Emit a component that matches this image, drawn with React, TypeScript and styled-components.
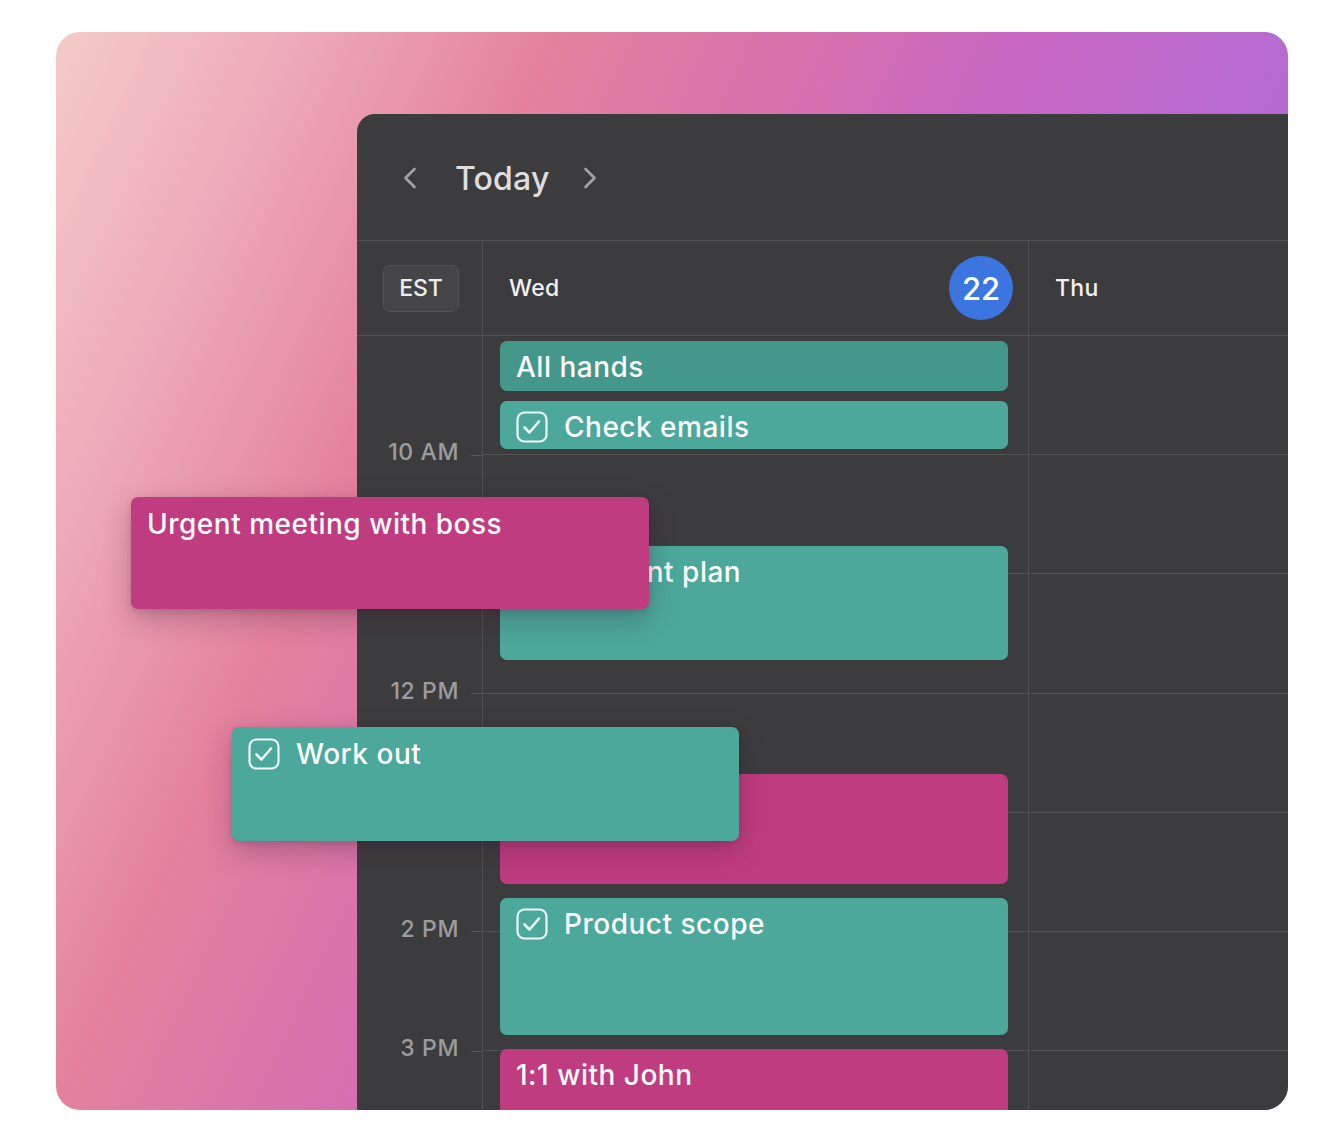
import styled, { createGlobalStyle } from "styled-components";

type Tone = "teal" | "tealDark" | "pink";

type CalEvent = {
  title: string;
  top: number;
  height: number;
  tone: Tone;
  task?: boolean;
};

const HOUR = 119.2;

const tones: Record<Tone, string> = {
  teal: "#4ba89b",
  tealDark: "#44978b",
  pink: "#bf3c80",
};

const slots = ["9 AM", "10 AM", "11 AM", "12 PM", "1 PM", "2 PM", "3 PM"];
const labels = ["10 AM", "11 AM", "12 PM", "1 PM", "2 PM", "3 PM"];

const wedEvents: CalEvent[] = [
  { title: "All hands", top: 5, height: 50, tone: "tealDark" },
  { title: "Check emails", top: 65, height: 48, tone: "teal", task: true },
  { title: "Adjustment plan", top: 210, height: 114, tone: "teal" },
  { title: "Design review", top: 438, height: 110, tone: "pink" },
  { title: "Product scope", top: 562, height: 137, tone: "teal", task: true },
  { title: "1:1 with John", top: 713, height: 110, tone: "pink" },
];

const GlobalStyle = createGlobalStyle`
  html, body {
    margin: 0;
    padding: 0;
    background: #ffffff;
  }
  body {
    font-family: Inter, "Noto Sans", "Liberation Sans", sans-serif;
    -webkit-font-smoothing: antialiased;
  }
  * {
    box-sizing: border-box;
  }
`;

const Page = styled.div`
  padding: 32px 54px 30px 56px;
`;

const Card = styled.div`
  position: relative;
  width: 1232px;
  height: 1078px;
  border-radius: 24px;
  overflow: hidden;
  display: flex;
  padding: 82px 0 0 301px;
  background: linear-gradient(
    115deg,
    #f4cbc9 0%,
    #eeaab8 14%,
    #e3819d 29%,
    #d570b0 45%,
    #c867c1 55%,
    #b66bd3 72%,
    #a86ad6 100%
  );
`;

const Panel = styled.div`
  flex: 1;
  min-width: 0;
  display: flex;
  flex-direction: column;
  background: #3c3c3e;
  border-top-left-radius: 18px;
  overflow: hidden;
`;

const Toolbar = styled.div`
  flex-shrink: 0;
  height: 126px;
  display: flex;
  align-items: center;
  padding: 2px 0 0 45px;
`;

const NavButton = styled.button`
  display: flex;
  align-items: center;
  justify-content: center;
  background: none;
  border: none;
  padding: 0;
  color: #a3a3a5;
  cursor: pointer;
`;

const Title = styled.h1`
  margin: 0 32px 0 37px;
  font-size: 32px;
  font-weight: 500;
  color: #dedede;
  letter-spacing: 0.2px;
`;

const Columns = styled.div`
  display: grid;
  grid-template-columns: 126px 546px 1fr;
`;

const HeadRow = styled(Columns)`
  flex-shrink: 0;
  height: 96px;
  border-top: 1px solid #525254;
  border-bottom: 1px solid #525254;
`;

const HeadCell = styled.div<{ $divider?: boolean }>`
  display: flex;
  align-items: center;
  padding: 0 15px 0 26px;
  border-right: ${(p) => (p.$divider ? "1px solid #525254" : "none")};
`;

const ZoneTag = styled.div`
  width: 76px;
  height: 47px;
  display: flex;
  align-items: center;
  justify-content: center;
  border-radius: 7px;
  background: #454547;
  border: 1px solid #545456;
  color: #ececec;
  font-size: 23px;
  font-weight: 500;
`;

const DayName = styled.span`
  flex: 1;
  color: #f0f0f0;
  font-size: 23px;
  font-weight: 500;
  letter-spacing: 0.3px;
`;

const DateBadge = styled.span`
  width: 64px;
  height: 64px;
  border-radius: 50%;
  background: #3b76e0;
  color: #ffffff;
  display: flex;
  align-items: center;
  justify-content: center;
  font-size: 31px;
  font-weight: 500;
`;

const Body = styled(Columns)`
  flex: 1;
  min-height: 0;
  overflow: hidden;
`;

const Gutter = styled.div`
  border-right: 1px solid #525254;
  padding-top: ${HOUR / 2}px;
`;

const TimeSlot = styled.div`
  height: ${HOUR}px;
  display: flex;
  align-items: center;
  justify-content: flex-end;
  gap: 12px;

  &::after {
    content: "";
    width: 11px;
    height: 1px;
    background: #58585a;
  }
`;

const TimeLabel = styled.span`
  color: #9c9c9e;
  font-size: 23px;
  font-weight: 500;
  letter-spacing: 0.6px;
  transform: translateY(-3px);
`;

const DayColumn = styled.div<{ $divider?: boolean }>`
  position: relative;
  border-right: ${(p) => (p.$divider ? "1px solid #525254" : "none")};
`;

const HourCell = styled.div`
  height: ${HOUR}px;
  border-bottom: 1px solid #525254;
`;

const EventCard = styled.div<{ $tone: Tone; $top: number; $height: number }>`
  position: absolute;
  left: 17px;
  right: 20px;
  top: ${(p) => p.$top}px;
  height: ${(p) => p.$height}px;
  background: ${(p) => tones[p.$tone]};
  border-radius: 7px;
  padding: 9px 16px;
  overflow: hidden;
`;

const FloatingCard = styled.div<{
  $tone: Tone;
  $left: number;
  $top: number;
  $width: number;
  $height: number;
}>`
  position: absolute;
  left: ${(p) => p.$left}px;
  top: ${(p) => p.$top}px;
  width: ${(p) => p.$width}px;
  height: ${(p) => p.$height}px;
  background: ${(p) => tones[p.$tone]};
  border-radius: 7px;
  padding: 10px 16px;
  box-shadow: 0 10px 28px rgba(60, 20, 50, 0.28), 0 2px 6px rgba(0, 0, 0, 0.12);
`;

const EventTitle = styled.div`
  display: flex;
  align-items: center;
  gap: 16px;
  height: 34px;
  color: #fbfbfb;
  font-size: 28px;
  font-weight: 500;
  letter-spacing: 0.5px;
  white-space: nowrap;
`;

function Chevron({ dir }: { dir: "left" | "right" }) {
  return (
    <svg width="16" height="22" viewBox="0 0 16 22" fill="none">
      <path
        d={dir === "left" ? "M12.5 2 L3.5 11 L12.5 20" : "M3.5 2 L12.5 11 L3.5 20"}
        stroke="currentColor"
        strokeWidth="2.6"
        strokeLinecap="round"
        strokeLinejoin="round"
      />
    </svg>
  );
}

function TaskBox() {
  return (
    <svg width="32" height="32" viewBox="0 0 32 32" fill="none">
      <rect x="1.5" y="1.5" width="29" height="29" rx="7" stroke="#eef8f6" strokeWidth="2.2" />
      <path
        d="M8.5 16.5 L13.5 21.5 L23 10.5"
        stroke="#eef8f6"
        strokeWidth="2.6"
        strokeLinecap="round"
        strokeLinejoin="round"
      />
    </svg>
  );
}

function EventLabel({ event }: { event: { title: string; task?: boolean } }) {
  return (
    <EventTitle>
      {event.task && <TaskBox />}
      {event.title}
    </EventTitle>
  );
}

export default function App() {
  return (
    <>
      <GlobalStyle />
      <Page>
        <Card>
          <Panel>
            <Toolbar>
              <NavButton aria-label="Previous day">
                <Chevron dir="left" />
              </NavButton>
              <Title>Today</Title>
              <NavButton aria-label="Next day">
                <Chevron dir="right" />
              </NavButton>
            </Toolbar>

            <HeadRow>
              <HeadCell $divider>
                <ZoneTag>EST</ZoneTag>
              </HeadCell>
              <HeadCell $divider>
                <DayName>Wed</DayName>
                <DateBadge>22</DateBadge>
              </HeadCell>
              <HeadCell>
                <DayName>Thu</DayName>
              </HeadCell>
            </HeadRow>

            <Body>
              <Gutter>
                {labels.map((h) => (
                  <TimeSlot key={h}>
                    <TimeLabel>{h}</TimeLabel>
                  </TimeSlot>
                ))}
              </Gutter>
              <DayColumn $divider>
                {slots.map((h) => (
                  <HourCell key={h} />
                ))}
                {wedEvents.map((ev) => (
                  <EventCard key={ev.title} $tone={ev.tone} $top={ev.top} $height={ev.height}>
                    <EventLabel event={ev} />
                  </EventCard>
                ))}
              </DayColumn>
              <DayColumn>
                {slots.map((h) => (
                  <HourCell key={h} />
                ))}
              </DayColumn>
            </Body>
          </Panel>

          <FloatingCard $tone="pink" $left={75} $top={465} $width={518} $height={112}>
            <EventLabel event={{ title: "Urgent meeting with boss" }} />
          </FloatingCard>
          <FloatingCard $tone="teal" $left={176} $top={695} $width={507} $height={114}>
            <EventLabel event={{ title: "Work out", task: true }} />
          </FloatingCard>
        </Card>
      </Page>
    </>
  );
}
